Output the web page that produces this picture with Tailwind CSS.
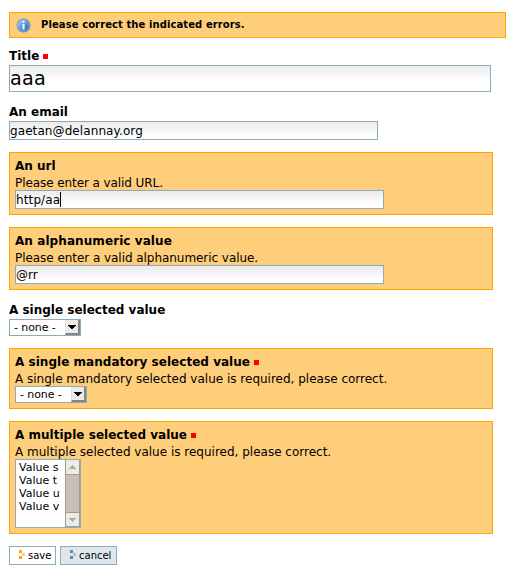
<!DOCTYPE html>
<html lang="en">
<head>
<meta charset="utf-8">
<title>Form</title>
<script src="https://cdn.jsdelivr.net/npm/@tailwindcss/browser@4"></script>
</head>
<body class="bg-white text-black font-['DejaVu_Sans',sans-serif] text-[12px] w-[515px] h-[567px] overflow-hidden">
<form class="flex flex-col items-start pl-[9px] pt-[12px]">
  <div class="w-[497px] h-[26px] border border-[#ffa500] bg-[#ffce7b] flex items-center pl-[6px] font-bold text-[10px] tracking-[0.09px]">
    <svg class="w-[15px] h-[15px] mr-[10px] shrink-0" viewBox="0 0 15 15">
      <defs><linearGradient id="g" x1="0" y1="0" x2="1" y2="1"><stop offset="0" stop-color="#b4d2f2"/><stop offset=".5" stop-color="#5d97dc"/><stop offset="1" stop-color="#1f5fb8"/></linearGradient></defs>
      <circle cx="7.5" cy="7.5" r="6.9" fill="#5480b5"/><circle cx="7.3" cy="7.3" r="5.9" fill="url(#g)" stroke="#b5cbe5" stroke-width=".6"/>
      <path d="M6.5 3h2v2h-2zM6.5 6h2v5.6h-2z" fill="#fff"/>
    </svg>
    <span class="-mt-[2px]">Please correct the indicated errors.</span>
  </div>

  <label class="mt-[10px] h-[17px] leading-[16px] font-bold flex items-start">Title<i class="w-[5px] h-[5px] bg-[#f00] ml-[4px] mt-[6px]"></i></label>
  <div class="w-[482px] h-[27px] border border-[#8cacbb] bg-linear-to-b from-[#ebebeb] to-white to-60% flex items-center text-[19.2px] tracking-[0.2px] leading-[25px]">aaa</div>

  <label class="mt-[12px] h-[17px] leading-[16px] font-bold">An email</label>
  <div class="w-[369px] h-[19px] border border-[#8cacbb] bg-linear-to-b from-[#ebebeb] to-white to-80% leading-[18px] tracking-[0.09px]">gaetan@delannay.org</div>

  <div class="mt-[12px] w-[484px] h-[63px] border border-[#ffa500] bg-[#ffce7b] pl-[5px] pt-[5px]">
    <div class="h-[16px] leading-[16px] font-bold">An url</div>
    <div class="h-[16px] leading-[18px] -tracking-[0.08px]">Please enter a valid URL.</div>
    <div class="relative w-[369px] h-[19px] border border-[#8cacbb] bg-linear-to-b from-[#ebebeb] to-white to-80% leading-[18px] tracking-[0.12px] flex items-center">http/aa<i class="w-px h-[15px] bg-black"></i></div>
  </div>

  <div class="mt-[12px] w-[484px] h-[63px] border border-[#ffa500] bg-[#ffce7b] pl-[5px] pt-[5px]">
    <div class="h-[16px] leading-[16px] font-bold tracking-[0.08px]">An alphanumeric value</div>
    <div class="h-[16px] leading-[18px] -tracking-[0.05px]">Please enter a valid alphanumeric value.</div>
    <div class="relative w-[369px] h-[19px] border border-[#8cacbb] bg-linear-to-b from-[#ebebeb] to-white to-80% leading-[18px]">@rr</div>
  </div>

  <label class="mt-[12px] h-[17px] leading-[16px] font-bold">A single selected value</label>
  <div class="w-[72px] h-[17px] border border-[#8cacbb] bg-white pl-[4px] text-[11px] leading-[15px] flex justify-between">
    <span class="-tracking-[0.08px]">- none -</span>
    <span class="w-[15px] h-[15px] bg-[#ecebe8] border-r-2 border-b-2 border-[#858585] border-l border-l-[#dedede] flex items-center justify-center"><svg class="w-[8px] h-[4px]" viewBox="0 0 8 4" shape-rendering="crispEdges"><path d="M0 0h8v1H7v1H6v1H5v1H3V3H2V2H1V1H0z"/></svg></span>
  </div>

  <div class="mt-[12px] w-[484px] h-[61px] border border-[#ffa500] bg-[#ffce7b] pl-[5px] pt-[5px]">
    <div class="h-[16px] leading-[16px] font-bold tracking-[0.03px] flex items-center">A single mandatory selected value<i class="w-[5px] h-[5px] bg-[#f00] ml-[4px] mt-[1px]"></i></div>
    <div class="h-[16px] leading-[18px]">A single mandatory selected value is required, please correct.</div>
    <div class="relative w-[72px] h-[17px] border border-[#8cacbb] bg-white pl-[4px] text-[11px] leading-[15px] flex justify-between">
      <span class="-tracking-[0.08px]">- none -</span>
      <span class="w-[15px] h-[15px] bg-[#ecebe8] border-r-2 border-b-2 border-[#858585] border-l border-l-[#dedede] flex items-center justify-center"><svg class="w-[8px] h-[4px]" viewBox="0 0 8 4" shape-rendering="crispEdges"><path d="M0 0h8v1H7v1H6v1H5v1H3V3H2V2H1V1H0z"/></svg></span>
    </div>
  </div>

  <div class="mt-[12px] w-[484px] h-[113px] border border-[#ffa500] bg-[#ffce7b] pl-[5px] pt-[5px]">
    <div class="h-[16px] leading-[16px] font-bold tracking-[0.02px] flex items-center">A multiple selected value<i class="w-[5px] h-[5px] bg-[#f00] ml-[4px] mt-[1px]"></i></div>
    <div class="h-[16px] leading-[18px]">A multiple selected value is required, please correct.</div>
    <div class="relative w-[66px] h-[69px] border border-[#8cacbb] bg-white pl-[3px] text-[11px] leading-[13px] flex justify-between">
      <div class="pt-[1px]"><div>Value s</div><div>Value t</div><div>Value u</div><div>Value v</div></div>
      <div class="w-[15px] h-[67px] border-x border-[#a59a91] bg-[#cbbfb5] flex flex-col justify-between">
        <span class="h-[15px] bg-[#ecebe6] border-b border-[#a59a91] flex items-center justify-center"><svg class="w-[7px] h-[4px]" viewBox="0 0 7 4" shape-rendering="crispEdges"><path fill="#aeaba5" d="M3 0h1v1h1v1h1v1h1v1H0V3h1V2h1V1h1z"/></svg></span>
        <span class="h-[15px] bg-[#ecebe6] border-y border-[#a59a91] flex items-center justify-center"><svg class="w-[7px] h-[4px]" viewBox="0 0 7 4" shape-rendering="crispEdges"><path fill="#aeaba5" d="M0 0h7v1H6v1H5v1H4v1H3V3H2V2H1V1H0z"/></svg></span>
      </div>
    </div>
  </div>

  <div class="mt-[12px] flex gap-[4px] text-[10px] leading-[17px]">
    <div class="w-[47px] h-[19px] border border-[#8cacbb] bg-white pl-[9px] flex">
      <svg class="w-[6px] h-[9px] mt-[3px] mr-[3px] shrink-0" viewBox="0 0 6 9" shape-rendering="crispEdges"><path fill="#ffa500" d="M0 0h3v3H0zM0 6h3v3H0z"/><path fill="#ffce7b" d="M3 3h3v3H3z"/></svg><span>save</span>
    </div>
    <div class="w-[57px] h-[19px] border border-[#8cacbb] bg-[#dee7ec] pl-[9px] flex">
      <svg class="w-[6px] h-[9px] mt-[3px] mr-[3px] shrink-0" viewBox="0 0 6 9" shape-rendering="crispEdges"><path fill="#5f8c9f" d="M0 0h3v3H0zM0 6h3v3H0z"/><path fill="#adc3cd" d="M3 3h3v3H3z"/></svg><span>cancel</span>
    </div>
  </div>
</form>
</body>
</html>
